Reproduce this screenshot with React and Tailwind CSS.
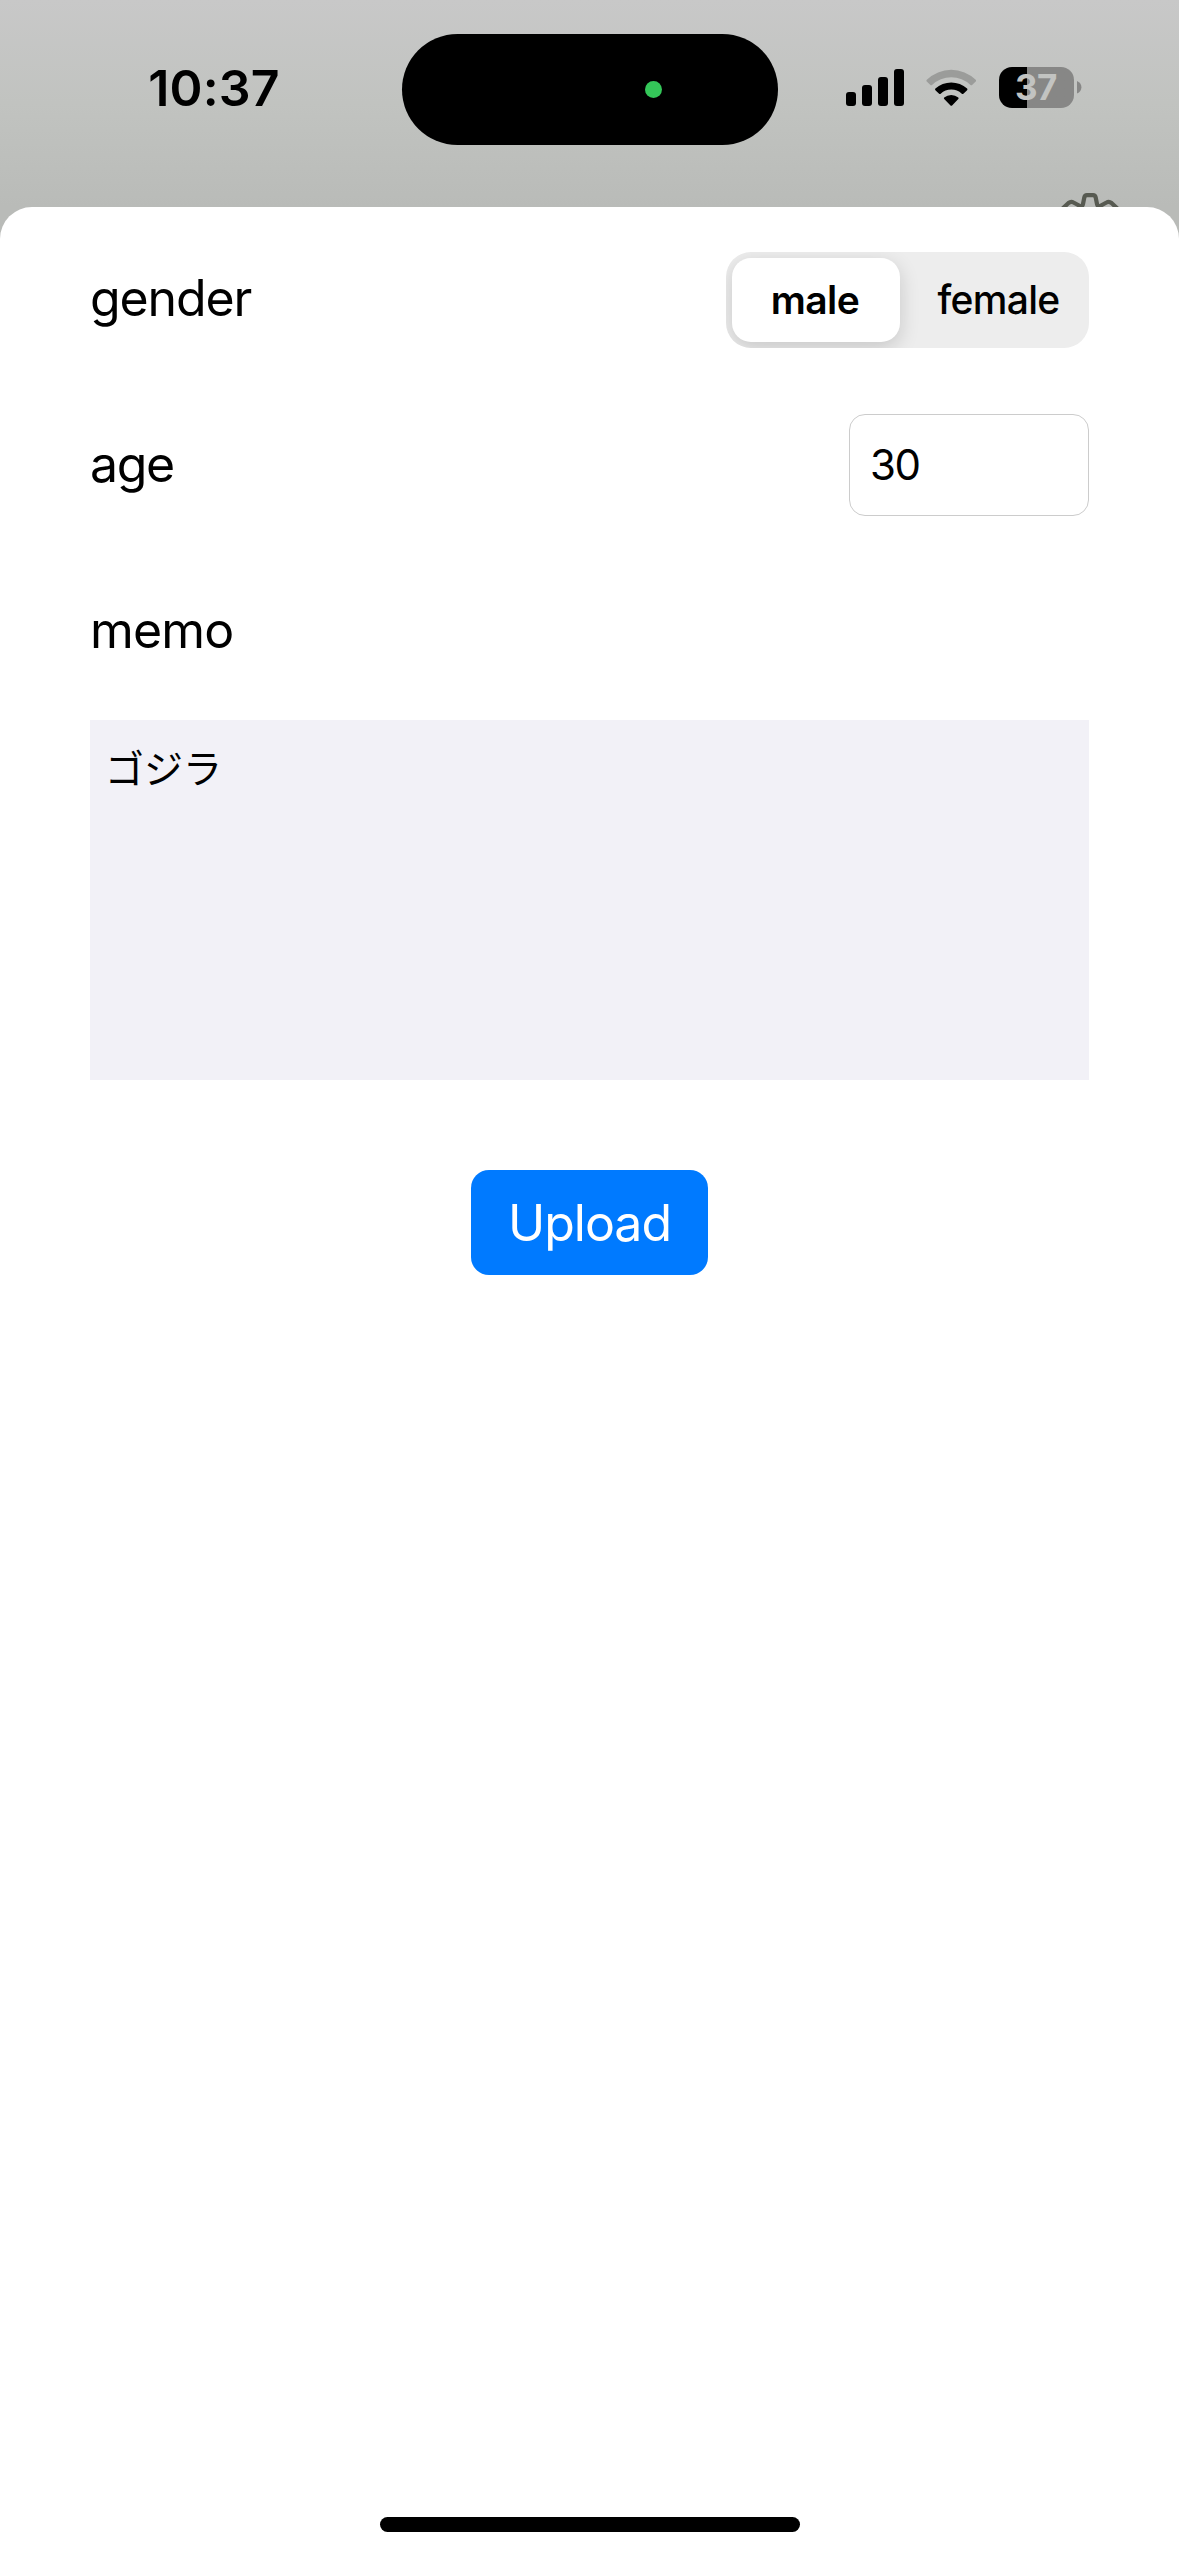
function StatusBar() {
  return (
    <header className="relative flex h-[207px] items-start bg-linear-to-b from-[#c8c8c8] via-[#c1c3c0] to-[#b9bbb8]">
      <div className="flex w-[402px] justify-center pt-[58px] pl-[26px] text-[50px] leading-[60px] font-semibold tracking-[0.2px]">
        10:37
      </div>
      <div className="mt-[33.5px] flex h-[111px] w-[376px] items-center rounded-full bg-black pl-[243px]">
        <div className="h-[17px] w-[17px] rounded-full bg-[#34c759]" />
      </div>
      <div className="flex h-[41px] items-start pl-[68px] mt-[67px]">
        <svg width="58" height="41" viewBox="0 0 58 41">
          <rect x="0" y="25" width="10" height="14" rx="3" />
          <rect x="16" y="18" width="10" height="21" rx="3" />
          <rect x="32" y="10" width="10" height="29" rx="3" />
          <rect x="48" y="2" width="10" height="37" rx="3" />
        </svg>
        <svg className="ml-[22px]" width="51" height="41" viewBox="0 0 51 41">
          <path d="M0.8 12.8a35 35 0 0 1 48.9 0q.8.8 0 1.7l-3.6 3.4q-.8.7-1.6 0a28 28 0 0 0-38.5 0q-.8.7-1.6 0L.8 14.5q-.8-.9 0-1.7Z" fill="#9b9c9a" />
          <path d="M9.4 21.6a23.4 23.4 0 0 1 31.7 0q.8.8 0 1.6l-3.7 3.5q-.8.7-1.6 0a15.6 15.6 0 0 0-21.1 0q-.8.7-1.6 0l-3.7-3.5q-.8-.8 0-1.6Z" />
          <path d="M18.2 30.6a10.6 10.6 0 0 1 14.1 0q.7.8 0 1.5l-6.2 6.3q-.8.8-1.6 0l-6.3-6.3q-.7-.7 0-1.5Z" />
        </svg>
        <div className="ml-[22px] flex h-[41px] w-[75px] items-center justify-center rounded-[13px] bg-linear-to-r from-black from-[37.5%] to-[#878786] to-[37.5%] pr-[1px] text-[35px] leading-[41px] font-bold tracking-[-0.5px] text-[#c2c3c1]">
          37
        </div>
        <svg className="ml-[3px] mt-[14px]" width="5" height="13" viewBox="0 0 5 13">
          <path d="M0 0Q4.4 2 4.4 6.3T0 12.6Z" fill="#878786" />
        </svg>
      </div>
      <svg className="absolute top-[190px] left-[1055px]" width="70" height="17" viewBox="0 0 70 17" fill="none" stroke="#575a51" strokeWidth="4.2" strokeLinejoin="round">
        <path d="M6 20L13.5 13Q16 11 18.5 12.5L25 16Q27.500 17 28 14L29.300 7.500Q29.800 5.100 32 5.100H38Q40.200 5.100 40.700 7.500L42 14Q42.500 17 45 16L51.500 12.500Q54 11 56.500 13L64 20" />
      </svg>
    </header>
  );
}

function GenderPicker() {
  return (
    <div className="flex h-[96px] w-[363px] overflow-hidden rounded-[25px] bg-[#ededed] p-[6px]">
      <button className="h-[84px] w-[168px] rounded-[19px] bg-white pr-[2px] text-[39px] leading-[84px] font-semibold tracking-[-0.6px] shadow-[0_6px_20px_rgba(0,0,0,0.16)]">
        male
      </button>
      <button className="h-[84px] flex-1 pl-[14px] text-[39px] leading-[84px] font-medium tracking-[-0.7px]">
        female
      </button>
    </div>
  );
}

export default function App() {
  return (
    <div className="h-[2556px] w-[1179px] overflow-hidden bg-[#b9bbb8] font-['Inter','Noto_Sans_CJK_JP',sans-serif] text-black">
      <StatusBar />
      <main className="flex h-[2349px] flex-col rounded-t-[32px] bg-white px-[90px] pt-[45px]">
        <div className="flex h-[96px] items-center justify-between">
          <label className="pb-[4px] text-[50px] leading-[60px] tracking-[-1.1px]">gender</label>
          <GenderPicker />
        </div>
        <div className="mt-[66px] flex h-[102px] items-center justify-between">
          <label className="pb-[3px] text-[50px] leading-[60px] tracking-[-1.4px]">age</label>
          <div className="flex h-[102px] w-[240px] items-center rounded-[16px] border border-[#cccccc] pl-[20px] text-[42px] leading-[50px] tracking-[-1.5px]">
            30
          </div>
        </div>
        <label className="mt-[84px] text-[50px] leading-[60px] tracking-[-0.8px]">memo</label>
        <div className="mt-[60px] h-[360px] w-[999px] bg-[#f2f1f7] px-[15px] pt-[25px] text-[39px] leading-[48px]">
          ゴジラ
        </div>
        <button className="mt-[90px] h-[105px] w-[237px] self-center rounded-[18px] bg-[#007aff] pt-[1px] text-[50px] leading-[104px] tracking-[-1px] text-white">
          Upload
        </button>
        <div className="mt-auto mb-[24px] h-[15px] w-[420px] self-center rounded-full bg-black" />
      </main>
    </div>
  );
}
